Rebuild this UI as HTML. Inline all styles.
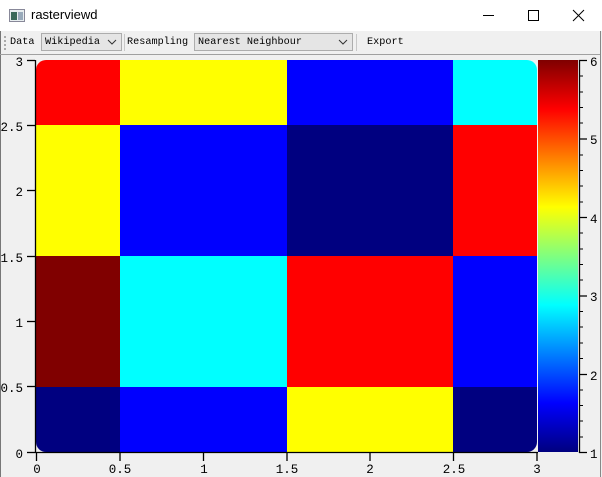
<!DOCTYPE html>
<html><head><style>
body{margin:0;width:602px;height:477px;overflow:hidden;background:#f0f0f0;font-family:"Liberation Mono",monospace;position:relative}
.tb{position:absolute;left:0;top:0;width:602px;height:31px;background:#fff}
.title{position:absolute;left:31px;top:7px;font:13px "Liberation Sans",sans-serif;color:#000}
.toolbar{position:absolute;left:0;top:31px;width:600px;height:23px;border-bottom:1px solid #a0a0a0;font-size:10.2px}
.t{position:absolute;top:6px}
.combo{position:absolute;top:2px;height:18px;border:1px solid #adadad;background:#e5e5e5;box-sizing:border-box}
.combo span{position:absolute;left:3px;top:3px}
.sep{position:absolute;top:3px;width:1px;height:17px;background:#c8c8c8}
</style></head><body>
<div class="tb">
<svg style="position:absolute;left:9px;top:9px" width="16" height="13"><rect x="0.5" y="0.5" width="15" height="12" fill="#e8eef0" stroke="#889"/><rect x="2" y="3" width="6" height="8" fill="#3a6a5a"/><rect x="9" y="3" width="5" height="8" fill="#9ab"/></svg>
<div class="title">rasterviewd</div>
<svg style="position:absolute;left:480px;top:8px" width="110" height="16"><line x1="3" y1="7.5" x2="14" y2="7.5" stroke="#000"/><rect x="48.5" y="2.5" width="10" height="10" fill="none" stroke="#000"/><path d="M93 2L104 13M104 2L93 13" stroke="#000"/></svg>
</div>
<div style="position:absolute;left:0;top:31px;width:1px;height:446px;background:#777"></div>
<div style="position:absolute;left:600px;top:31px;width:1px;height:446px;background:#888"></div>
<div class="toolbar">
<div style="position:absolute;left:4px;top:5px;width:2px;height:14px;border-left:2px dotted #aaa"></div>
<div class="t" style="left:10px">Data</div>
<div class="combo" style="left:41px;width:81px"><span>Wikipedia</span><svg style="position:absolute;right:4px;top:5px" width="10" height="6"><path d="M1 1L5 5L9 1" fill="none" stroke="#333"/></svg></div>
<div class="sep" style="left:124px"></div>
<div class="t" style="left:127px">Resampling</div>
<div class="combo" style="left:194px;width:159px"><span>Nearest Neighbour</span><svg style="position:absolute;right:4px;top:5px" width="10" height="6"><path d="M1 1L5 5L9 1" fill="none" stroke="#333"/></svg></div>
<div class="sep" style="left:356px"></div>
<div class="t" style="left:367px">Export</div>
</div>
<svg style="position:absolute;left:0;top:0" width="602" height="477" font-family="Liberation Mono,monospace" font-size="12.5">
<defs>
<clipPath id="c"><rect x="36" y="60" width="501" height="392" rx="10"/></clipPath>
<linearGradient id="jet" x1="0" y1="1" x2="0" y2="0">
<stop offset="0" stop-color="#00007f"/><stop offset="0.125" stop-color="#0000ff"/><stop offset="0.375" stop-color="#00ffff"/><stop offset="0.625" stop-color="#ffff00"/><stop offset="0.875" stop-color="#ff0000"/><stop offset="1" stop-color="#7f0000"/>
</linearGradient>
</defs>
<g clip-path="url(#c)">
<rect x="36" y="60" width="84" height="65" fill="#f00"/><rect x="120" y="60" width="167" height="65" fill="#ff0"/><rect x="287" y="60" width="166" height="65" fill="#00f"/><rect x="453" y="60" width="84" height="65" fill="#0ff"/>
<rect x="36" y="125" width="84" height="131" fill="#ff0"/><rect x="120" y="125" width="167" height="131" fill="#00f"/><rect x="287" y="125" width="166" height="131" fill="#000080"/><rect x="453" y="125" width="84" height="131" fill="#f00"/>
<rect x="36" y="256" width="84" height="131" fill="#800000"/><rect x="120" y="256" width="167" height="131" fill="#0ff"/><rect x="287" y="256" width="166" height="131" fill="#f00"/><rect x="453" y="256" width="84" height="131" fill="#00f"/>
<rect x="36" y="387" width="84" height="65" fill="#000080"/><rect x="120" y="387" width="167" height="65" fill="#00f"/><rect x="287" y="387" width="166" height="65" fill="#ff0"/><rect x="453" y="387" width="84" height="65" fill="#000080"/>
</g>
<rect x="538" y="60" width="40" height="392" fill="url(#jet)"/>
<g stroke="#000" stroke-width="1.3">
<line x1="35.5" y1="60" x2="35.5" y2="453"/><line x1="35" y1="452.5" x2="538" y2="452.5"/>
<line x1="27" y1="60.5" x2="35" y2="60.5"/><line x1="27" y1="125.5" x2="35" y2="125.5"/><line x1="27" y1="190.5" x2="35" y2="190.5"/><line x1="27" y1="256.5" x2="35" y2="256.5"/><line x1="27" y1="321.5" x2="35" y2="321.5"/><line x1="27" y1="386.5" x2="35" y2="386.5"/><line x1="27" y1="452.5" x2="35" y2="452.5"/>
<line x1="36.5" y1="453" x2="36.5" y2="461"/><line x1="120" y1="453" x2="120" y2="461"/><line x1="203.5" y1="453" x2="203.5" y2="461"/><line x1="287" y1="453" x2="287" y2="461"/><line x1="370" y1="453" x2="370" y2="461"/><line x1="453.5" y1="453" x2="453.5" y2="461"/><line x1="537" y1="453" x2="537" y2="461"/>
<line x1="579.5" y1="60" x2="579.5" y2="453"/>
<path d="M579 60.5h8M579 139h8M579 217.5h8M579 296h8M579 374.5h8M579 452.5h8"/>
<path d="M579 76h4M579 92h4M579 107.5h4M579 123h4M579 155h4M579 170.5h4M579 186h4M579 202h4M579 233h4M579 249h4M579 264.5h4M579 280h4M579 311.5h4M579 327h4M579 343h4M579 358.5h4M579 390h4M579 405.5h4M579 421h4M579 437h4" stroke-width="1"/>
</g>
<g text-anchor="end" fill="#000">
<text x="23" y="66">3</text><text x="23" y="131">2.5</text><text x="23" y="196">2</text><text x="23" y="262">1.5</text><text x="23" y="327">1</text><text x="23" y="392">0.5</text><text x="23" y="458">0</text>
</g>
<g text-anchor="middle" fill="#000">
<text x="37" y="473">0</text><text x="120" y="473">0.5</text><text x="204" y="473">1</text><text x="287" y="473">1.5</text><text x="370" y="473">2</text><text x="454" y="473">2.5</text><text x="537" y="473">3</text>
</g>
<g fill="#000">
<text x="590" y="66">6</text><text x="590" y="144">5</text><text x="590" y="223">4</text><text x="590" y="301">3</text><text x="590" y="380">2</text><text x="590" y="458">1</text>
</g>
</svg>
</body></html>
